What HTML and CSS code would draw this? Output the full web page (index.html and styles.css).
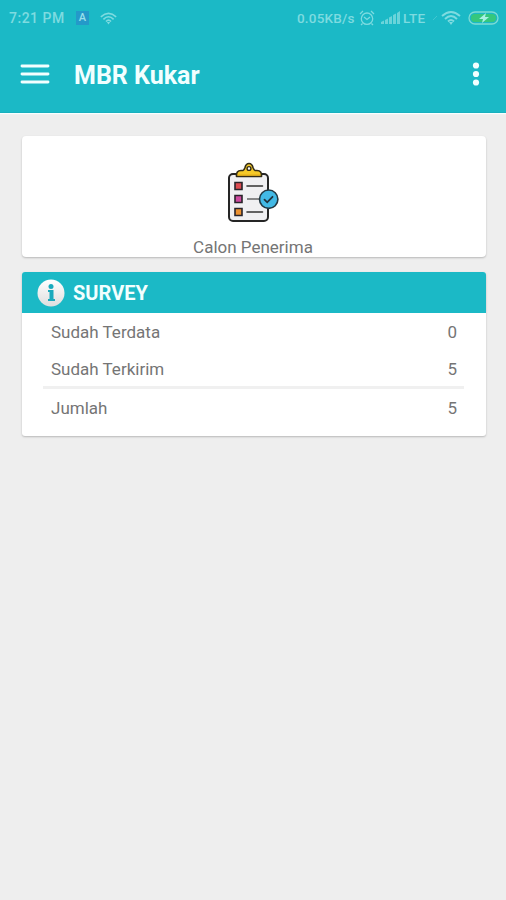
FILE: index.html
```html
<!DOCTYPE html>
<html lang="id">
<head>
<meta charset="utf-8">
<title>MBR Kukar</title>
<link rel="stylesheet" href="styles.css">
</head>
<body>
<header class="top">
  <div class="status">
    <span class="clock">7:21 PM</span>
    <span class="badge">A</span>
    <svg class="wifi-small" viewBox="0 0 20 14" width="17" height="13"><g fill="none" stroke="currentColor" stroke-width="1.900"><path d="M1 5q9-8 18 0M4 8q6-6 12 0M7 10.500q3-3 6 0"/></g><path d="M8 11h4l-2 3z" fill="currentColor"/></svg>
    <span class="spacer"></span>
    <span class="speed">0.05KB/s</span>
    <svg class="alarm" viewBox="0 0 16 16" width="16" height="16" fill="none" stroke="currentColor" stroke-width="1.300"><circle cx="8" cy="8.700" r="5.700"/><path d="M1 4l3-3M15 4l-3-3M3.500 13.500L2 15M12.500 13.500L14 15M5 7l3 2.500L11 7"/></svg>
    <svg class="signal" viewBox="0 0 19 13" width="19" height="13" fill="currentColor"><path d="M0 13v-2l3-1.500V13zM4 13V9l3-1.500V13zM8 13V6.500L11 5v8zM12 13V4l3-1.500V13zM16 13V2l3-2v13z"/></svg>
    <span class="lte">LTE</span>
    <svg class="slash" viewBox="0 0 6 6" width="6" height="6"><path d="M1 5l4-4" stroke="currentColor" fill="none"/></svg>
    <svg class="wifi" viewBox="0 0 20 14" width="20" height="14"><g fill="none" stroke="currentColor" stroke-width="1.900"><path d="M1 5q9-8 18 0M4 8q6-6 12 0M7 10.500q3-3 6 0"/></g><path d="M8 11h4l-2 3z" fill="currentColor"/></svg>
    <svg class="battery" viewBox="0 0 32 14" width="32" height="14"><rect x="1" y="1" width="29" height="12" rx="6" fill="none" stroke="#7edbd5" stroke-width="1.300"/><rect x="3" y="3" width="25" height="8" rx="4" fill="#35c77d"/><path d="M18 2l-7 6h4l-1 4 7-6h-4z" fill="#a8f0e4"/></svg>
  </div>
  <div class="bar">
    <svg class="menu" viewBox="0 0 30 20" width="30" height="20" stroke="#f2ffff" stroke-width="2.900" stroke-linecap="round"><path d="M2 2h26M2 10h26M2 18h26"/></svg>
    <h1>MBR Kukar</h1>
    <svg class="more" viewBox="0 0 8 24" width="8" height="24" fill="#f2ffff"><circle cx="4" cy="3.500" r="3.100"/><circle cx="4" cy="12" r="3.100"/><circle cx="4" cy="20.500" r="3.100"/></svg>
  </div>
</header>
<main>
  <section class="card shortcut">
    <svg class="clipboard" viewBox="0 0 54 62" width="54" height="62">
      <rect x="3" y="12" width="39" height="47" rx="4" fill="#f0f0f2" stroke="#252525" stroke-width="2"/>
      <path d="M10.500 14.500q-.5-6 4.500-6h2q1-.2 2-3Q20 1.500 23 1.500t4 4q1 2.800 2 3h2q5 0 4.500 6z" fill="#f5c928" stroke="#332c16" stroke-width="1.600" stroke-linejoin="round"/>
      <path d="M12 13h22" stroke="#e5ac18" stroke-width="1"/>
      <circle cx="23" cy="6.500" r="1.900" fill="#fff" stroke="#332c16" stroke-width="1.400"/>
      <g stroke="#29242a" stroke-width="1.600"><path fill="#dc4b50" d="M9 20.500h7v7H9z"/><path fill="#cf4aa0" d="M9 33.500h7v7H9z"/><path fill="#ed9231" d="M9 46.500h7v7H9z"/></g>
      <path d="M21 24h15.500M21 50h15.500" stroke="#333" stroke-width="1.600" stroke-linecap="round"/><path d="M21 37h12" stroke="#666" stroke-width="1.500"/>
      <circle cx="42.700" cy="37.200" r="9.200" fill="#42b9e5" stroke="#243842" stroke-width="1.600"/>
      <path d="M38.500 37.700l2.700 2.600 5.300-5.500" fill="none" stroke="#20323e" stroke-width="1.800" stroke-linecap="round"/>
    </svg>
    <span class="caption">Calon Penerima</span>
  </section>
  <section class="card survey">
    <div class="survey-head">
      <svg viewBox="0 0 28 28" width="28" height="28"><defs><linearGradient id="disc" x2="0" y2="1"><stop stop-color="#fff"/><stop offset="1" stop-color="#dedede"/></linearGradient></defs><circle cx="14" cy="14" r="13.500" fill="url(#disc)"/><circle cx="14" cy="7.500" r="2.500" fill="#19aabd"/><path d="M11 11h5.500v9H18v2h-7v-2h1.500v-7H11z" fill="#19aabd"/></svg>
      <h2>SURVEY</h2>
    </div>
    <div class="row"><span>Sudah Terdata</span><span>0</span></div>
    <div class="row"><span>Sudah Terkirim</span><span>5</span></div>
    <div class="rule"></div>
    <div class="row total"><span>Jumlah</span><span>5</span></div>
  </section>
</main>
</body>
</html>
```
FILE: styles.css
```css
* { box-sizing: border-box; }
body { margin: 0; min-height: 900px; background: #eeeeee; font-family: Roboto, sans-serif; color: #757575; }
svg { display: block; flex: none; }
h1, h2 { margin: 0; }
.top { height: 113px; background: #1bb9c6; border-bottom: 1px solid #18b0be; box-shadow: 0 1px 1px #f8ffff; }
.status { height: 36px; display: flex; align-items: center; padding: 0 6px 0 9px; color: #7edbe0; font-size: 13px; font-weight: 500; white-space: nowrap; }
.clock { width: 67px; font-size: 14px; letter-spacing: .5px; }
.badge { width: 13px; height: 14px; background: #2499c9; color: #9be0ea; font-size: 11px; line-height: 14px; text-align: center; margin-right: 11px; }
.spacer { flex: 1; }
.speed { width: 62px; font-size: 13.5px; letter-spacing: .2px; }
.alarm { margin-right: 6px; }
.signal { margin-right: 3px; margin-top: -2px; opacity: .8; }
.lte { width: 29px; font-size: 13.5px; letter-spacing: .3px; }
.slash { margin-right: 3px; opacity: .4; }
.wifi { margin-right: 7px; }
.bar { height: 77px; display: flex; align-items: center; padding: 0 26px 0 20px; }
.menu { margin-right: 24px; margin-top: -1px; }
h1 { flex: 1; color: #f2ffff; font-size: 25px; font-weight: 700; line-height: 30px; padding-top: 2px; }
.more { margin-top: -2px; }
main { padding: 23px 20px 0 22px; }
.card { width: 464px; background: #fff; border-radius: 4px; box-shadow: 0 1px 2px #b8b8b8; }
.shortcut { height: 121px; display: flex; flex-direction: column; align-items: center; padding-top: 26px; margin-bottom: 15px; }
.clipboard { margin-right: 2px; }
.caption { font-size: 17px; line-height: 20px; margin: 13px 2px 0 0; }
.survey { height: 164px; overflow: hidden; border-radius: 3px; }
.survey-head { height: 41px; background: #1bb9c6; display: flex; align-items: center; padding-left: 15px; gap: 8px; }
h2 { color: #f2ffff; font-size: 20px; font-weight: 700; padding-top: 1px; }
.row { height: 37px; display: flex; align-items: center; justify-content: space-between; padding: 1px 29px 0; font-size: 17px; }
.rule { height: 3px; margin: -1px 22px 0 21px; background: #f0f0f0; }
.total { height: 36px; }
```
